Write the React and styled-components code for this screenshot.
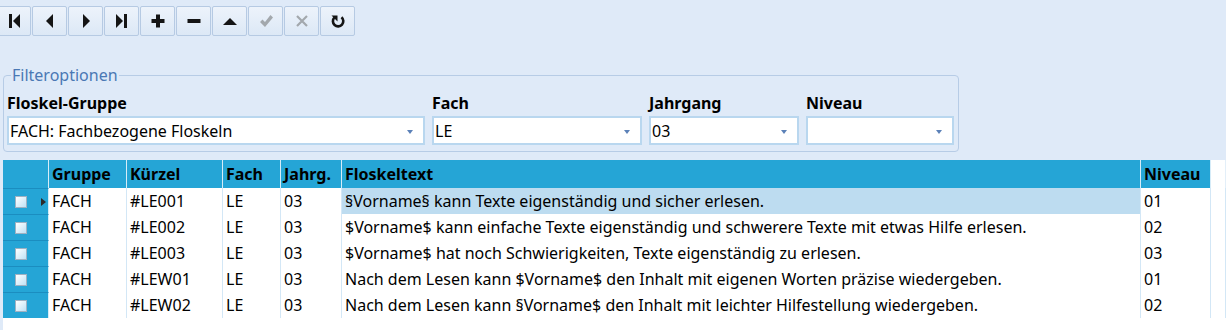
import React from "react";
import styled, { createGlobalStyle } from "styled-components";

const Global = createGlobalStyle`
  body {
    margin: 0;
    background: #dfeaf8;
    font-family: "Noto Sans", "Open Sans", sans-serif;
    overflow: hidden;
  }
`;

const Page = styled.main`
  width: 1226px;
  height: 330px;
  background: #dfeaf8;
`;

const Toolbar = styled.div`
  display: flex;
  gap: 1px;
  padding-top: 6px;
  margin-left: -4px;
`;

const ToolButton = styled.button`
  width: 35px;
  height: 30px;
  padding: 0;
  border: 1px solid #b6cae3;
  border-radius: 2px;
  background: linear-gradient(#edf3fb, #dce8f6);
  display: flex;
  align-items: center;
  justify-content: center;
  color: ${(p) => (p.disabled ? "#a3a8ad" : "#151515")};
`;

const Group = styled.fieldset`
  margin: 30px 0 0 3px;
  width: 955px;
  box-sizing: border-box;
  border: 1px solid #b7cce6;
  border-radius: 4px;
  padding: 9px 4px 6px 3px;
`;

const Legend = styled.legend`
  color: #4a78b4;
  font-size: 16px;
  padding: 0 1px;
  margin-left: 4px;
  line-height: 18px;
`;

const Filters = styled.div`
  display: grid;
  grid-template-columns: 418px 210px 150px 148px;
  column-gap: 7px;
  row-gap: 3px;
`;

const Label = styled.div`
  font-weight: 700;
  font-size: 16px;
  color: #000;
  line-height: 20px;
  white-space: nowrap;
`;

const Combo = styled.div`
  height: 29px;
  box-sizing: border-box;
  border: 2px solid #b9d7ef;
  background: #fff;
  display: flex;
  align-items: center;
  padding: 0 10px 0 1px;
  font-size: 16px;
  color: #000;
`;

const ComboText = styled.span`
  flex: 1;
`;

const Arrow = styled.span`
  width: 0;
  height: 0;
  border-left: 3.5px solid transparent;
  border-right: 3.5px solid transparent;
  border-top: 4px solid #5b81b8;
  margin-top: 2px;
`;

const Grid = styled.div`
  margin: 8px 0 0 3px;
  display: grid;
  grid-template-columns: 46px 78px 96px 58px 61px 799px 70px 1fr;
  grid-auto-rows: 26px;
  grid-template-rows: 28px;
  background: #fff;
  font-size: 16px;
  color: #000;
  height: 180px;
  align-content: start;
`;

const HeadCell = styled.div`
  background: #25a5d6;
  border-right: 1px solid #d6ecf8;
  font-weight: 700;
  padding-left: 3px;
  display: flex;
  align-items: center;
  white-space: nowrap;
  ${(p) => p.$blank && "background: #fff; border-right: 1px solid #e3eff9;"}
`;

const Selector = styled.div`
  background: #25a5d6;
  border-right: 1px solid #d6ecf8;
  border-top: 1px solid #1b8dc0;
  box-sizing: border-box;
  display: flex;
  align-items: center;
  padding-left: 12px;
  gap: 14px;
`;

const Check = styled.span`
  width: 12px;
  height: 12px;
  box-sizing: border-box;
  border: 1px solid #9fb1c2;
  background: linear-gradient(135deg, #ffffff, #bfe1f5);
`;

const Pointer = styled.span`
  width: 0;
  height: 0;
  border-top: 4px solid transparent;
  border-bottom: 4px solid transparent;
  border-left: 5px solid #2b2b2b;
`;

const Cell = styled.div`
  border-right: 1px solid #d3e7f6;
  padding-left: 3px;
  display: flex;
  align-items: center;
  white-space: nowrap;
  overflow: hidden;
  background: ${(p) => (p.$selected ? "#bddcf0" : "#fff")};
`;

const Icon = ({ children, size = 16 }) => (
  <svg width={size} height={size} viewBox="0 0 16 16" fill="currentColor">
    {children}
  </svg>
);

const tools = [
  <Icon><rect x="3" y="1" width="3" height="14" /><path d="M14 1v14L7 8z" /></Icon>,
  <Icon><path d="M11 1v14L4 8z" /></Icon>,
  <Icon><path d="M5 1v14l7-7z" /></Icon>,
  <Icon><path d="M2 1v14l7-7z" /><rect x="10" y="1" width="3" height="14" /></Icon>,
  <Icon><rect x="1.5" y="6" width="13" height="4" /><rect x="6" y="1.5" width="4" height="13" /></Icon>,
  <Icon><rect x="1.5" y="6" width="13" height="4" /></Icon>,
  <Icon><path d="M1 12L8 5l7 7z" /></Icon>,
  <Icon><path d="M2 9l2.5-2.5L7 9l5.5-7L15 4.5 7 14z" /></Icon>,
  <Icon>
    <path d="M3 3l10 10M13 3L3 13" stroke="currentColor" strokeWidth="2.2" fill="none" />
  </Icon>,
  <Icon>
    <path
      d="M11.5 4.2A5.2 5.2 0 1 1 4.3 4.6"
      stroke="currentColor"
      strokeWidth="2.6"
      fill="none"
    />
    <path d="M1.5 2.5h6v6z" />
  </Icon>,
];

const rows = [
  ["FACH", "#LE001", "LE", "03", "§Vorname§ kann Texte eigenständig und sicher erlesen.", "01"],
  ["FACH", "#LE002", "LE", "03", "$Vorname$ kann einfache Texte eigenständig und schwerere Texte mit etwas Hilfe erlesen.", "02"],
  ["FACH", "#LE003", "LE", "03", "$Vorname$ hat noch Schwierigkeiten, Texte eigenständig zu erlesen.", "03"],
  ["FACH", "#LEW01", "LE", "03", "Nach dem Lesen kann $Vorname$ den Inhalt mit eigenen Worten präzise wiedergeben.", "01"],
  ["FACH", "#LEW02", "LE", "03", "Nach dem Lesen kann §Vorname$ den Inhalt mit leichter Hilfestellung wiedergeben.", "02"],
];

const filters = [
  ["Floskel-Gruppe", "FACH: Fachbezogene Floskeln"],
  ["Fach", "LE"],
  ["Jahrgang", "03"],
  ["Niveau", ""],
];

export default function App() {
  return (
    <Page>
      <Global />
      <Toolbar>
        {tools.map((t, i) => (
          <ToolButton key={i} disabled={i === 7 || i === 8}>
            {t}
          </ToolButton>
        ))}
      </Toolbar>
      <Group>
        <Legend>Filteroptionen</Legend>
        <Filters>
          {filters.map(([l]) => (
            <Label key={l}>{l}</Label>
          ))}
          {filters.map(([l, v]) => (
            <Combo key={l}>
              <ComboText>{v}</ComboText>
              <Arrow />
            </Combo>
          ))}
        </Filters>
      </Group>
      <Grid>
        <HeadCell />
        {["Gruppe", "Kürzel", "Fach", "Jahrg.", "Floskeltext", "Niveau"].map((h) => (
          <HeadCell key={h}>{h}</HeadCell>
        ))}
        <HeadCell $blank />
        {rows.map((r, i) => (
          <React.Fragment key={r[1]}>
            <Selector>
              <Check />
              {i === 0 && <Pointer />}
            </Selector>
            {r.map((c, j) => (
              <Cell key={j} $selected={i === 0 && j === 4}>
                {c}
              </Cell>
            ))}
            <Cell />
          </React.Fragment>
        ))}
      </Grid>
    </Page>
  );
}
